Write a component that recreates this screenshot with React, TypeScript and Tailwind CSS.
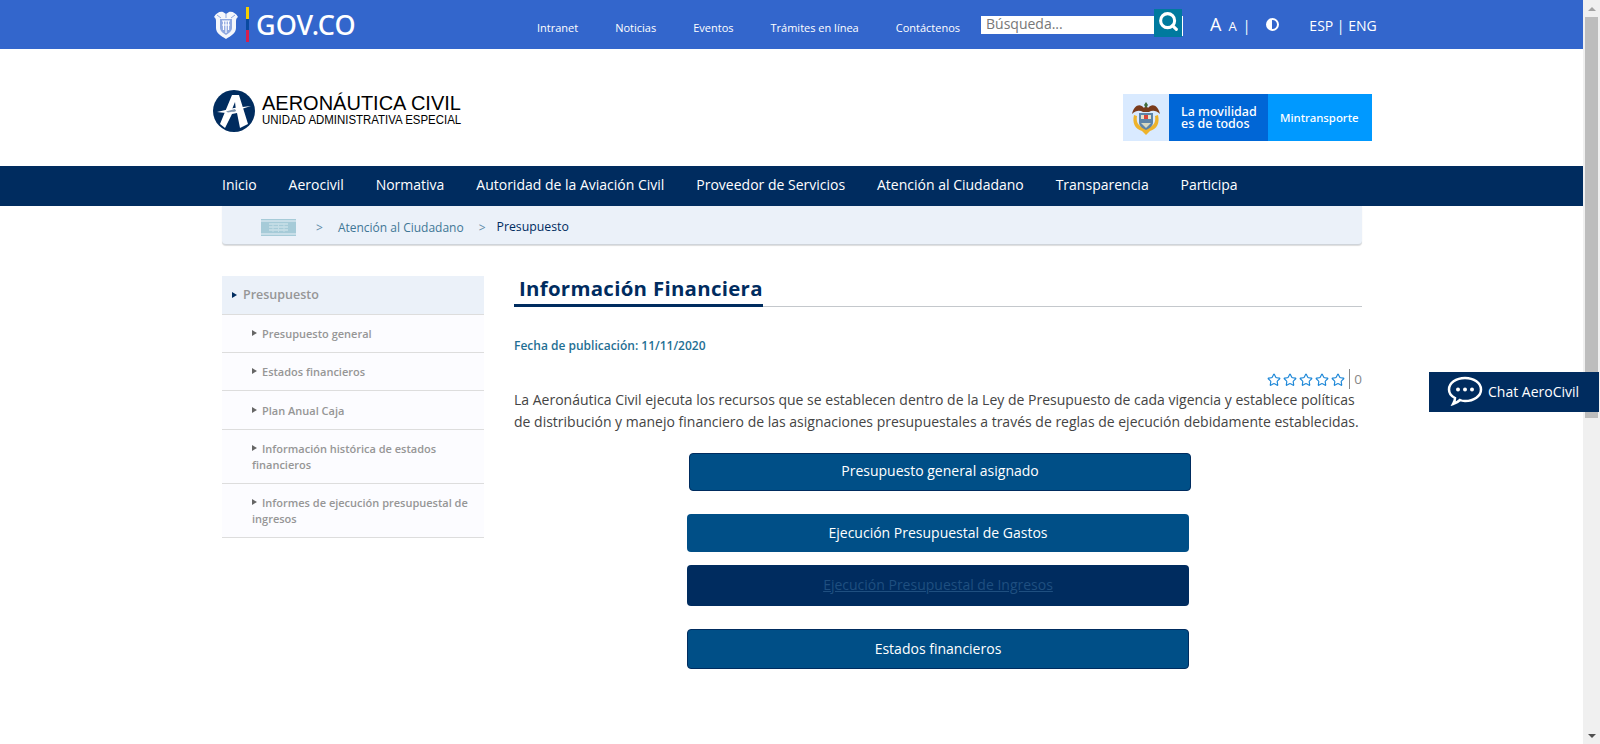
import { Search, Star } from 'lucide-react';

const topLinks = ['Intranet', 'Noticias', 'Eventos', 'Trámites en línea', 'Contáctenos'];
const navLinks = ['Inicio', 'Aerocivil', 'Normativa', 'Autoridad de la Aviación Civil', 'Proveedor de Servicios', 'Atención al Ciudadano', 'Transparencia', 'Participa'];

function Shield() {
    return (
        <svg width="26" height="30" viewBox="0 0 26 30">
            <path d="M1 7C3 3 7 1 10 2l3 2 3-2c3-1 7 1 9 5-2 1-2 3-2 5v6c0 5-5 8-10 11C8 26 3 23 3 18v-6c0-2 0-4-2-5z" fill="#f4f6fb" />
            <path d="M7 9h12v9c0 3-3 5-6 7-3-2-6-4-6-7z" fill="#8fa8e0" />
            <path d="M9 11h8M9 15h8M10.500 11v9M15.500 11v9M13 11v12" stroke="#fff" strokeWidth="1.200" />
            <path d="M4 5l4 3M22 5l-4 3M13 4v4" stroke="#8fa8e0" strokeWidth="1" />
        </svg>
    );
}

function AeroLogo() {
    return (
        <svg width="42" height="42" viewBox="0 0 42 42">
            <circle cx="21" cy="21" r="21" fill="#002c5f" />
            <path d="M19 5h7l9 29-8 4-3-15-5 1-7 14-5-4z" fill="#fff" />
            <path d="M22 12l-4 10 5-1z" fill="#002c5f" />
            <path d="M4 22l17-4 17-2-19 6-6 1z" fill="#fff" />
            <path d="M13 21.500l9-2.500 1 2-8 1.500z" fill="#002c5f" opacity="0.5" />
        </svg>
    );
}

function Arms() {
    return (
        <svg width="34" height="36" viewBox="0 0 34 36">
            <path d="M3 14C5 5 11 3 15 8l2-3 2 3c4-5 10-3 12 6-4-4-8-4-11-2h-6c-3-2-7-2-11 2z" fill="#7a3b1c" />
            <path d="M5 15c-2 8 1 14 8 16l4 4 4-4c7-2 10-8 8-16l-3 1c1 6-1 9-5 11H13c-4-2-6-5-5-11z" fill="#eeb32b" />
            <path d="M10 13h14v9c0 4-3 6-7 8-4-2-7-4-7-8z" fill="#5d84a8" />
            <path d="M12 15h10v4H12z" fill="#e6e0c8" />
            <path d="M15 15h4v4h-4z" fill="#d9443a" />
            <path d="M12 23h10l-5 5z" fill="#d8d8c0" />
            <path d="M15 5l2-3 2 3-2 3z" fill="#3f6b3a" />
        </svg>
    );
}

function Building() {
    return (
        <svg width="35" height="17" viewBox="0 0 35 17">
            <rect width="35" height="1.500" fill="#a6cbd8" />
            <rect y="2.500" width="35" height="12" fill="#a6cbd8" />
            <rect y="15.500" width="35" height="1.500" fill="#a6cbd8" />
            <path d="M8 5h19M8 8h19M8 11h19" stroke="#dcebf0" strokeWidth="1.200" />
            <path d="M12 4v9M17.500 4v9M23 4v9" stroke="#c4dde6" strokeWidth="1" />
        </svg>
    );
}

function ChatBubble() {
    return (
        <svg width="36" height="30" viewBox="0 0 36 30" fill="none">
            <path d="M18 2c9 0 16 5 16 11.500S27 25 18 25c-2 0-3 0-5-1-2 2-4 3-7 4 1-2 2-3 2-6-4-2-6-5-6-8.500C2 7 9 2 18 2z" stroke="#fff" strokeWidth="2.500" />
            <circle cx="11" cy="13.500" r="2" fill="#fff" />
            <circle cx="18" cy="13.500" r="2" fill="#fff" />
            <circle cx="25" cy="13.500" r="2" fill="#fff" />
        </svg>
    );
}

function Caret({ color }: { color: string }) {
    return <span className={`inline-block w-0 h-0 border-y-[3.500px] border-y-transparent border-l-[5px] ${color} mr-[5px] align-[2px]`} />;
}

export default function App() {
    return (
        <div className="h-[744px] w-full flex overflow-hidden bg-white font-['Open_Sans',sans-serif]">
            <div className="relative flex-1 min-w-0">
                <header className="h-[49px] bg-[#3366cc] text-white flex pl-[213px]">
                    <div className="w-[324px] flex items-center h-[49px]">
                        <Shield />
                        <div className="w-[3px] h-[35px] ml-[7px] flex flex-col">
                            <div className="flex-1 bg-[#f5d000]" />
                            <div className="flex-1 bg-[#0a4aa0]" />
                            <div className="flex-1 bg-[#d61f4e]" />
                        </div>
                        <span className="ml-[7px] text-[27px] font-medium font-['Noto_Sans',sans-serif] leading-none">GOV.CO</span>
                    </div>
                    <nav className="flex gap-[37px] text-[11px] pt-[20px] leading-[16px] whitespace-nowrap">
                        {topLinks.map((l) => <a key={l}>{l}</a>)}
                    </nav>
                    <div className="ml-[21px] flex items-start pt-[9px]">
                        <div className="mt-[7px] w-[173px] h-[18px] bg-white text-[#777] text-[14px] leading-[16px] px-[5px]">Búsqueda...</div>
                        <div className="w-[28px] h-[28px] bg-[#007a9e] flex items-center justify-center">
                            <Search size={21} strokeWidth={3.500} className="text-white -mt-[3px]" />
                        </div>
                        <div className="mt-[7px] w-px h-[20px] bg-white" />
                        <div className="flex items-baseline ml-[27px] mt-[4px] leading-[22px]">
                            <span className="text-[18px]">A</span>
                            <span className="text-[13px] ml-[7px]">A</span>
                            <span className="text-[14px] ml-[6px]">|</span>
                        </div>
                        <div className="ml-[16px] mt-[9px] w-[13px] h-[13px] rounded-full border-[2px] border-white bg-[linear-gradient(90deg,#fff_50%,transparent_50%)]" />
                        <div className="ml-[30px] mt-[7px] text-[14px] leading-[19px] whitespace-nowrap">ESP | ENG</div>
                    </div>
                </header>

                <div className="h-[117px] flex items-start justify-between pl-[213px] pr-[211px]">
                    <div className="flex mt-[41px] gap-[7px]">
                        <AeroLogo />
                        <div className="font-['Liberation_Sans',sans-serif] text-black pt-[3px]">
                            <div className="text-[20px] leading-[21px]">AERONÁUTICA CIVIL</div>
                            <div className="text-[12.500px] leading-[12px] scale-x-[0.915] origin-left whitespace-nowrap">UNIDAD ADMINISTRATIVA ESPECIAL</div>
                        </div>
                    </div>
                    <div className="flex mt-[45px] h-[47px] w-[249px] text-white font-medium font-['Noto_Sans',sans-serif]">
                        <div className="w-[46px] bg-[#d9eaff] flex items-center justify-center"><Arms /></div>
                        <div className="w-[99px] bg-[#0066d6] flex flex-col justify-center pl-[12px] text-[12.500px] leading-[12px]">
                            <span>La movilidad</span>
                            <span>es de todos</span>
                        </div>
                        <div className="flex-1 bg-[#0099ff] flex items-center pl-[12px] text-[11.400px]">Mintransporte</div>
                    </div>
                </div>

                <nav className="h-[40px] bg-[#002c5f] text-white pl-[222px] pb-[3px] flex items-center gap-[31.900px] text-[14px] font-medium">
                    {navLinks.map((l) => <a key={l}>{l}</a>)}
                </nav>

                <div className="ml-[222px] w-[1140px] h-[39px] bg-[#ebf1f9] rounded-b-[4px] border-b-[1px] border-[#cfd4da] shadow-[0_1px_1px_#ddd] flex items-center pt-[5px] text-[12px]">
                    <span className="ml-[39px]"><Building /></span>
                    <span className="ml-[20px] text-[#5d8ba8]">&gt;</span>
                    <span className="ml-[15px] text-[#3f7796]">Atención al Ciudadano</span>
                    <span className="ml-[15px] text-[#5d8ba8]">&gt;</span>
                    <span className="ml-[11px] text-[#002c5f] font-medium text-[12.300px]">Presupuesto</span>
                </div>

                <div className="flex ml-[222px] w-[1140px] mt-[31px]">
                    <aside className="w-[262px] shrink-0 text-[#969696] font-semibold text-[11px] leading-[16px]">
                        <div className="h-[39px] bg-[#ebf1f9] border-b border-[#dddddd] flex items-center pl-[10px] text-[12.500px]">
                            <Caret color="border-l-[#002c5f]" />
                            <span className="ml-[1px]">Presupuesto</span>
                        </div>
                        <div className="h-[38px] bg-[#fcfcff] border-b border-[#dddddd] pl-[30px] pt-[11px]">
                            <Caret color="border-l-[#666]" />Presupuesto general
                        </div>
                        <div className="h-[38px] bg-[#fcfcff] border-b border-[#dddddd] pl-[30px] pt-[11px]">
                            <Caret color="border-l-[#666]" />Estados financieros
                        </div>
                        <div className="h-[39px] bg-[#fcfcff] border-b border-[#dddddd] pl-[30px] pt-[12px]">
                            <Caret color="border-l-[#666]" />Plan Anual Caja
                        </div>
                        {[
                            ['Información histórica de estados', 'financieros'],
                            ['Informes de ejecución presupuestal de', 'ingresos'],
                        ].map(([a, b]) => (
                            <div key={a} className="h-[54px] bg-[#fcfcff] border-b border-[#dddddd] pl-[30px] pt-[11px]">
                                <Caret color="border-l-[#666]" />{a}<br />{b}
                            </div>
                        ))}
                    </aside>

                    <main className="flex-1 ml-[30px] min-w-0">
                        <div className="h-[31px] border-b border-[#c4c8cc]">
                            <h1 className="pl-[5px] w-[249px] h-[31px] border-b-[3px] border-[#002c5f] text-[#002c5f] text-[20.400px] font-bold leading-[25px] tracking-[0.3px] whitespace-nowrap">Información Financiera</h1>
                        </div>
                        <div className="mt-[31px] text-[#1f6f94] text-[12px] font-semibold leading-[16px]">Fecha de publicación: 11/11/2020</div>
                        <div className="mt-[15px] flex justify-end items-center h-[20px] text-[#888] text-[13.500px]">
                            <div className="flex gap-[2px] pr-[4px] pt-[2px]">
                                {[0, 1, 2, 3, 4].map((i) => <Star key={i} size={14} strokeWidth={2} className="text-[#1e88d8]" />)}
                            </div>
                            <span className="border-l border-[#888] pl-[4px] leading-[20px]">0</span>
                        </div>
                        <p className="text-[#444] text-[14px] leading-[22.400px] whitespace-nowrap">
                            La Aeronáutica Civil ejecuta los recursos que se establecen dentro de la Ley de Presupuesto de cada vigencia y establece políticas<br />
                            de distribución y manejo financiero de las asignaciones presupuestales a través de reglas de ejecución debidamente establecidas.
                        </p>
                        <div className="flex flex-col text-[14px] text-white">
                            <a className="mt-[19px] ml-[175px] w-[502px] h-[38px] pb-[2px] bg-[#004f87] border border-[#002c5f] rounded-[4px] flex items-center justify-center">Presupuesto general asignado</a>
                            <a className="mt-[23px] ml-[173px] w-[502px] h-[38px] bg-[#004f87] rounded-[4px] flex items-center justify-center">Ejecución Presupuestal de Gastos</a>
                            <a className="mt-[13px] ml-[173px] w-[502px] h-[41px] pb-[2px] bg-[#002c5f] rounded-[4px] flex items-center justify-center text-[#1f4f80] underline">Ejecución Presupuestal de Ingresos</a>
                            <a className="mt-[23px] ml-[173px] w-[502px] h-[40px] bg-[#004f87] border border-[#002c5f] rounded-[4px] flex items-center justify-center">Estados financieros</a>
                        </div>
                    </main>
                </div>

                <div className="absolute left-[1429px] top-[372px] w-[170px] h-[40px] pb-[2px] bg-[#002c5f] text-white text-[14px] flex items-center pl-[18px] gap-[5px]">
                    <ChatBubble />
                    Chat AeroCivil
                </div>
            </div>

            <div className="w-[17px] shrink-0 bg-[#f0f0f0] flex flex-col">
                <div className="h-[17px] flex items-center justify-center">
                    <span className="w-0 h-0 border-x-[4px] border-x-transparent border-b-[4px] border-b-[#a3a3a3]" />
                </div>
                <div className="h-[401px] mx-[2px] bg-[#bdbdbd]" />
                <div className="flex-1" />
                <div className="h-[17px] flex items-center justify-center">
                    <span className="w-0 h-0 border-x-[4px] border-x-transparent border-t-[4px] border-t-[#505050]" />
                </div>
            </div>
        </div>
    );
}
